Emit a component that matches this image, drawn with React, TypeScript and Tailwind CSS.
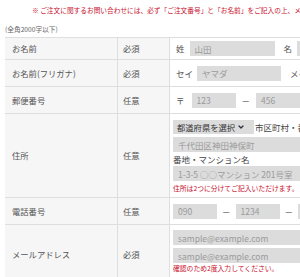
import { ChevronDown } from "lucide-react";

const font = { fontFamily: '"Noto Sans CJK JP", "Noto Sans", sans-serif' };

const Field = ({ placeholder, w }: { placeholder: string; w: string }) => (
  <input
    readOnly
    placeholder={placeholder}
    className={`${w} block h-[15px] shrink-0 bg-[#dcdcdc] px-[5px] text-[8.5px] text-[#333] outline-none placeholder:text-[#9a9a9a]`}
  />
);

const Label = ({ text, w, pl }: { text: string; w: string; pl: string }) => (
  <div className={`flex ${w} ${pl} shrink-0 items-center border-r border-[#dedede] bg-[#f6f6f6] text-[8.3px] text-[#555]`}>
    {text}
  </div>
);

const Row = ({ label, req, h, children }: { label: string; req: string; h: string; children: React.ReactNode }) => (
  <div className={`flex ${h} border-b border-[#dedede]`}>
    <Label text={label} w="w-[113px]" pl="pl-[7px]" />
    <Label text={req} w="w-[52px]" pl="pl-[5px]" />
    <div className="flex flex-1 items-center bg-white pl-[3px]">{children}</div>
  </div>
);

export default function App() {
  return (
    <div className="h-[277px] w-[300px] overflow-hidden bg-white" style={font}>
      <p className="whitespace-nowrap pl-[32px] pt-[5px] text-[6.7px] leading-[10px] text-[#c8102e]">
        ※ ご注文に関するお問い合わせには、必ず「ご注文番号」と「お名前」をご記入の上、メールにてお問い合わせください。
      </p>
      <p className="mt-[9px] whitespace-nowrap pl-[5px] text-[6.7px] leading-[10px] text-[#666]">(全角2000字以下)</p>

      <div className="ml-[5px] mt-[3px] w-[480px] border-t border-[#dedede]">
        <Row label="お名前" req="必須" h="h-[22px]">
          <span className="ml-[3px] mr-[5px] text-[8.5px] text-[#555]">姓</span>
          <Field placeholder="山田" w="w-[85px]" />
          <span className="ml-[9px] mr-[5px] text-[8.5px] text-[#555]">名</span>
          <Field placeholder="太郎" w="w-[85px]" />
        </Row>
        <Row label="お名前(フリガナ)" req="必須" h="h-[27px]">
          <span className="ml-[3px] mr-[4px] text-[8.5px] text-[#555]">セイ</span>
          <Field placeholder="ヤマダ" w="w-[84px]" />
          <span className="ml-[9px] mr-[4px] text-[8.5px] text-[#555]">メイ</span>
          <Field placeholder="タロウ" w="w-[84px]" />
        </Row>
        <Row label="郵便番号" req="任意" h="h-[27px]">
          <span className="ml-[3px] mr-[7px] text-[8.5px] text-[#555]">〒</span>
          <Field placeholder="123" w="w-[44px]" />
          <span className="mx-[6px] text-[8.5px] text-[#555]">－</span>
          <Field placeholder="456" w="w-[44px]" />
          <span className="ml-[6px] text-[8.5px] text-[#555]">※</span>
        </Row>
        <div className="flex h-[84px] border-b border-[#dedede]">
          <Label text="住所" w="w-[113px]" pl="pl-[7px]" />
          <Label text="任意" w="w-[52px]" pl="pl-[5px]" />
          <div className="flex flex-1 flex-col bg-white pl-[3px] pt-[6px]">
            <div className="flex h-[14px] items-center">
              <div className="flex h-[14px] w-[81px] items-center bg-[#dcdcdc] pl-[4px] text-[8.3px] text-[#333]">
                都道府県を選択
                <ChevronDown className="ml-[2px] h-[8px] w-[8px]" strokeWidth={4} />
              </div>
              <span className="ml-[1px] whitespace-nowrap text-[8.5px] text-[#444]">市区町村・番地</span>
            </div>
            <div className="mt-[3px]">
              <Field placeholder="千代田区神田神保町" w="w-[200px]" />
            </div>
            <span className="mt-[1px] text-[8.5px] leading-[12px] text-[#444]">番地・マンション名</span>
            <div className="mt-[1px]">
              <Field placeholder="1-3-5 ○○マンション 201号室" w="w-[200px]" />
            </div>
            <span className="mt-[2px] whitespace-nowrap text-[6.8px] leading-[10px] text-[#c8102e]">
              住所は2つに分けてご記入いただけます。
            </span>
          </div>
        </div>
        <Row label="電話番号" req="任意" h="h-[27px]">
          <Field placeholder="090" w="w-[44px]" />
          <span className="mx-[5px] text-[8.5px] text-[#555]">－</span>
          <Field placeholder="1234" w="w-[44px]" />
          <span className="mx-[5px] text-[8.5px] text-[#555]">－</span>
          <Field placeholder="5678" w="w-[44px]" />
        </Row>
        <div className="flex h-[60px] border-b border-[#dedede]">
          <Label text="メールアドレス" w="w-[113px]" pl="pl-[7px]" />
          <Label text="必須" w="w-[52px]" pl="pl-[5px]" />
          <div className="flex flex-1 flex-col bg-white pl-[3px] pt-[5px]">
            <Field placeholder="sample@example.com" w="w-[200px]" />
            <div className="mt-[3px]">
              <Field placeholder="sample@example.com" w="w-[200px]" />
            </div>
            <span className="whitespace-nowrap text-[6.8px] leading-[10px] text-[#c8102e]">
              確認のため2度入力してください。
            </span>
          </div>
        </div>
      </div>
    </div>
  );
}
